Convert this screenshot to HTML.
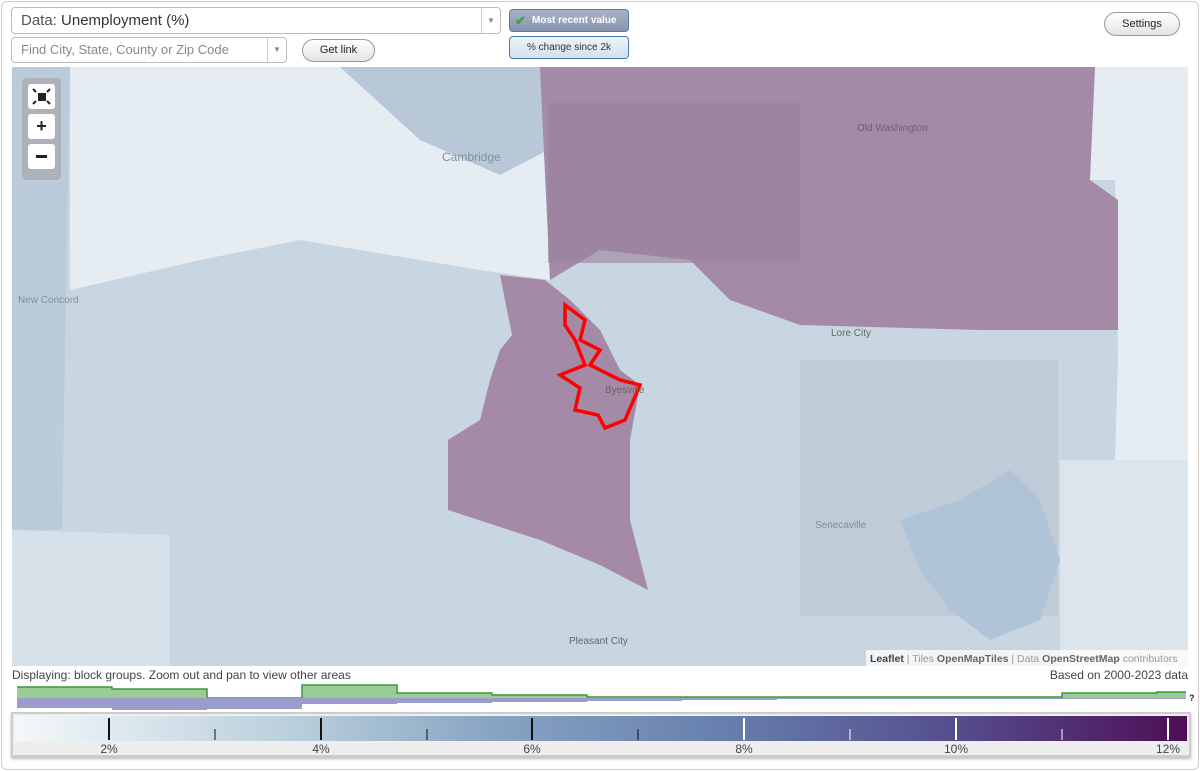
<!DOCTYPE html>
<html><head><meta charset="utf-8"><style>
body{margin:0;width:1200px;height:771px;background:#fff;font-family:"Liberation Sans",sans-serif;overflow:hidden;position:relative}
.frame{position:absolute;left:1px;top:1px;width:1196px;height:767px;border:1px solid #ccc;border-radius:6px}
.sel{position:absolute;background:#fff;border:1px solid #bbb;border-radius:4px;box-sizing:border-box;color:#555}
.btn{position:absolute;border:1px solid #999;border-radius:12px;background:linear-gradient(#fff,#e4e4e4);font-size:11px;text-align:center;box-sizing:border-box;color:#222}
.arrow{position:absolute;right:0;top:0;bottom:0;width:18px;border-left:1px solid #ccc;color:#888;font-size:8px;text-align:center}
</style></head><body>
<div class="frame"></div>
<div class="sel" style="left:11px;top:7px;width:490px;height:27px;font-size:15px;line-height:25px;padding-left:9px">Data: <span style="color:#333">Unemployment (%)</span><div class="arrow" style="line-height:25px">▼</div></div>
<div class="sel" style="left:11px;top:37px;width:276px;height:26px;font-size:13px;line-height:24px;padding-left:9px;color:#888">Find City, State, County or Zip Code<div class="arrow" style="line-height:24px">▼</div></div>
<div class="btn" style="left:302px;top:39px;width:73px;height:23px;line-height:21px">Get link</div>
<div style="position:absolute;left:509px;top:9px;width:120px;height:23px;border:1px solid #5a78a8;border-radius:4px;background:linear-gradient(#a8b2c8,#8894ae);color:#fff;font-size:10px;font-weight:bold;line-height:21px;box-sizing:border-box;padding-left:22px">Most recent value<span style="position:absolute;left:5px;top:0;color:#3a3;font-size:13px">✔</span></div>
<div style="position:absolute;left:509px;top:36px;width:120px;height:23px;border:1px solid #4a78b8;border-radius:4px;background:linear-gradient(#eef4fa,#d2e0ee);color:#333;font-size:10px;line-height:21px;text-align:center;box-sizing:border-box">% change since 2k</div>
<div class="btn" style="left:1104px;top:12px;width:76px;height:24px;line-height:22px">Settings</div>

<svg style="position:absolute;left:12px;top:67px" width="1176" height="599" viewBox="12 67 1176 599">
<rect x="12" y="67" width="1176" height="599" fill="#c8d6e2"/>
<path d="M70 67 L540 67 L550 280 L480 270 L300 240 L200 260 L70 290 Z" fill="#e6edf2"/>
<path d="M12 67 L70 67 L62 530 L12 530 Z" fill="#bccbd9"/>
<path d="M340 67 L540 67 L548 150 L500 175 L420 140 Z" fill="#b8c8d8"/>
<path d="M1080 67 L1188 67 L1188 460 L1115 460 L1118 360 L1115 180 L1080 180 Z" fill="#e6edf2"/>
<path d="M1060 460 L1188 460 L1188 666 L1060 666 Z" fill="#dde5ec"/>
<path d="M12 530 L170 535 L170 666 L12 666 Z" fill="#d7e1ea"/>
<rect x="800" y="360" width="258" height="256" fill="#bfccd8"/>
<path d="M900 520 L960 500 L1010 470 L1040 500 L1060 560 L1040 620 L990 640 L950 610 L920 570 Z" fill="#b0c4d8"/>
<path d="M540 67 L1095 67 L1090 180 L1118 200 L1118 330 L980 330 L800 325 L730 300 L690 260 L600 250 L550 280 Z" fill="#a48aa6"/>
<rect x="548" y="103" width="252" height="160" fill="#9a809c" opacity="0.6"/>
<path d="M500 275 L545 280 L570 300 L600 330 L620 370 L640 385 L630 440 L630 520 L648 590 L600 565 L540 540 L448 510 L448 440 L480 420 L490 380 L500 350 L512 335 Z" fill="#a48aa6"/>
<path d="M565 305 L585 320 L580 340 L600 350 L590 365 L620 380 L640 385 L625 420 L605 428 L598 415 L575 410 L580 388 L560 375 L585 365 L575 340 L565 325 Z" fill="none" stroke="#f00" stroke-width="3.5"/>
<g fill="#666" font-size="10" font-family="Liberation Sans,sans-serif">
<text x="442" y="161" font-size="12" fill="#7f8fa0">Cambridge</text>
<text x="857" y="131">Old Washington</text>
<text x="18" y="303" fill="#7f8fa0">New Concord</text>
<text x="831" y="336">Lore City</text>
<text x="605" y="393">Byesville</text>
<text x="815" y="528" fill="#7f8fa0">Senecaville</text>
<text x="569" y="644">Pleasant City</text>
</g>
<rect x="866" y="650" width="322" height="16" fill="#fff" opacity="0.75"/>
<text x="870" y="662" font-size="10.5" fill="#999" font-family="Liberation Sans,sans-serif"><tspan fill="#444" font-weight="bold">Leaflet</tspan> | Tiles <tspan fill="#666" font-weight="bold">OpenMapTiles</tspan> | Data <tspan fill="#666" font-weight="bold">OpenStreetMap</tspan> contributors</text>
<rect x="22" y="78" width="39" height="102" rx="4" fill="#999" opacity="0.5"/>
<rect x="28" y="84" width="27" height="25" rx="3" fill="#fff"/>
<rect x="38" y="93" width="8" height="8" fill="#222"/>
<path d="M33 89 l3 3 M50 89 l-3 3 M33 104 l3 -3 M50 104 l-3 -3" stroke="#222" stroke-width="2"/>
<rect x="28" y="114" width="27" height="25" rx="3" fill="#fff"/>
<text x="41.5" y="132" font-size="18" font-weight="bold" text-anchor="middle" fill="#222">+</text>
<rect x="28" y="144" width="27" height="25" rx="3" fill="#fff"/>
<rect x="36" y="155" width="11" height="3" fill="#222"/>
</svg>

<div style="position:absolute;left:12px;top:668px;font-size:12px;color:#444">Displaying: block groups. Zoom out and pan to view other areas</div>
<div style="position:absolute;right:12px;top:668px;font-size:12px;color:#444">Based on 2000-2023 data</div>
<svg style="position:absolute;left:0;top:684px" width="1200" height="30">
<path d="M17 3 H112 V5 H207 V14 H302 V1 H397 V9 H492 V11 H587 V13 H1062 V9 H1157 V8 H1186 V14 H17 Z" fill="#9ccc96"/>
<path d="M17 3 H112 V5 H207 V14 H302 V1 H397 V9 H492 V11 H587 V13 H1062 V9 H1157 V8 H1186" fill="none" stroke="#3a9a3a" stroke-width="1.5"/>
<path d="M17 14 H1186 V15 H1062 V15 H777 V16 H682 V17 H587 V18 H492 V19 H397 V20 H302 V25 H207 V26 H112 V24 H17 Z" fill="#9b9ccc"/>
<text x="1189" y="17" font-size="9" font-weight="bold" fill="#222">?</text>
</svg>
<div style="position:absolute;left:11px;top:712px;width:1180px;height:45px;border:2px solid #ccc;box-sizing:border-box;background:#eee;box-shadow:0 2px 3px #bbb">
<div style="position:absolute;left:2px;top:2px;right:2px;height:25px;background:linear-gradient(90deg,#f4f8fa,#b6ccda 25%,#8aa6c4 40%,#6780ae 60%,#554e8e 80%,#4e0e56)"></div>
<svg style="position:absolute;left:0;top:0" width="1176" height="41">
<g stroke-width="2"><path d="M96 4 V26 M308 4 V26 M519 4 V26" stroke="#111"/><path d="M731 4 V26 M943 4 V26 M1155 4 V26" stroke="#fff"/></g>
<g stroke-width="1"><path d="M202 15 V26 M414 15 V26 M625 15 V26" stroke="#111"/><path d="M837 15 V26 M1049 15 V26" stroke="#fff"/></g>
<g font-size="12" fill="#444" text-anchor="middle" font-family="Liberation Sans,sans-serif"><text x="96" y="39">2%</text><text x="308" y="39">4%</text><text x="519" y="39">6%</text><text x="731" y="39">8%</text><text x="943" y="39">10%</text><text x="1155" y="39">12%</text></g>
</svg></div>
</body></html>
